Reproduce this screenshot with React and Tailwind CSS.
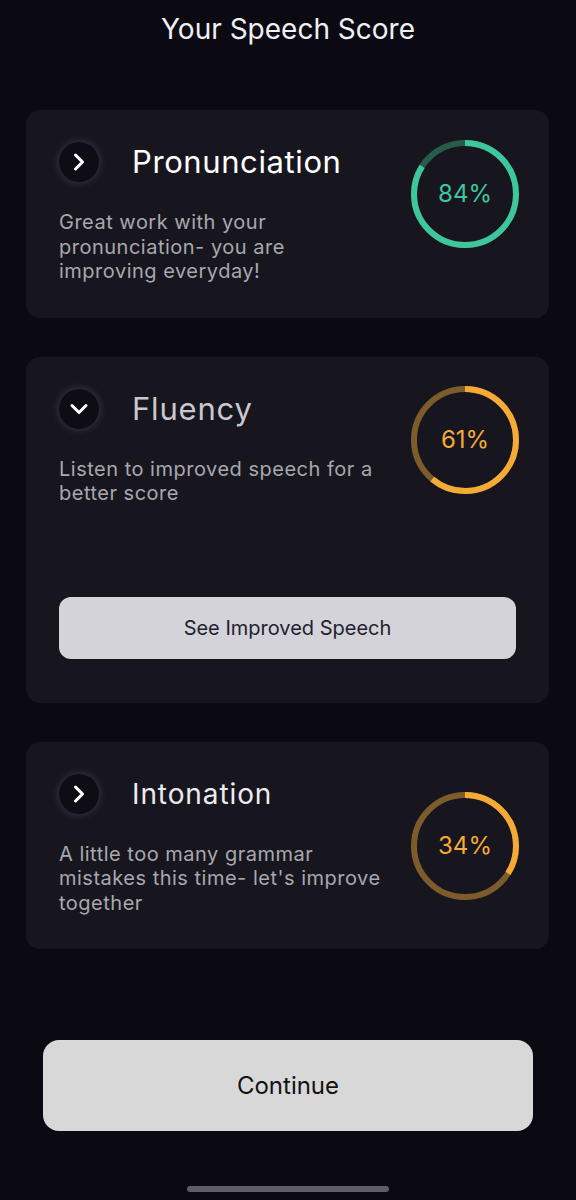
import { ChevronRight, ChevronDown } from "lucide-react";

const scores = [
  {
    title: "Pronunciation",
    titleClass: "text-[31px] tracking-[0.6px] text-white",
    text: ["Great work with your", "pronunciation- you are", "improving everyday!"],
    value: 84,
    color: "#3ec79d",
    track: "#285c4a",
    open: false,
    ringClass: "mt-[-2px]",
  },
  {
    title: "Fluency",
    titleClass: "text-[31px] tracking-[0.8px] text-[#c9c8ce]",
    text: ["Listen to improved speech for a", "better score"],
    value: 61,
    color: "#f6aa36",
    track: "#7d5c2c",
    open: true,
    ringClass: "mt-[-3px]",
  },
  {
    title: "Intonation",
    titleClass: "text-[28px] tracking-[0.9px] text-[#ececef]",
    text: ["A little too many grammar", "mistakes this time- let's improve", "together"],
    value: 34,
    color: "#f6aa36",
    track: "#7d5c2c",
    open: false,
    ringClass: "self-center mt-[4px]",
  },
];

const Ring = ({ value, color, track }) => {
  const r = 51;
  const c = 2 * Math.PI * r;
  return (
    <div className="relative w-[108px] h-[108px] shrink-0">
      <svg width="108" height="108" viewBox="0 0 108 108" className="-rotate-90">
        <circle cx="54" cy="54" r={r} fill="none" stroke={track} strokeWidth="6" />
        <circle
          cx="54"
          cy="54"
          r={r}
          fill="none"
          stroke={color}
          strokeWidth="6"
          strokeDasharray={`${(c * value) / 100} ${c}`}
        />
      </svg>
      <div
        className="absolute inset-0 flex items-center justify-center text-[24px]"
        style={{ color }}
      >
        {value}%
      </div>
    </div>
  );
};

const ScoreCard = ({ item }) => {
  return (
    <div className="bg-[#17161f] rounded-[14px] pt-[32px] pl-[33px] pr-[30px]">
      <div className="flex items-start justify-between">
        <div className="flex flex-col">
          <div className="flex items-center h-[40px]">
            <div className="w-[40px] h-[40px] rounded-full bg-[#0e0d15] flex items-center justify-center shadow-[0_0_8px_rgba(255,255,255,0.18)]">
              {item.open ? (
                <ChevronDown size={28} strokeWidth={2.6} color="#fff" />
              ) : (
                <ChevronRight size={28} strokeWidth={2.6} color="#fff" />
              )}
            </div>
            <span className={`ml-[33px] leading-[40px] ${item.titleClass}`}>{item.title}</span>
          </div>
          <p className="mt-[28px] text-[20px] tracking-[0.5px] leading-[24.5px] text-[#a9a8ae]">
            {item.text.map((line, i) => (
              <span key={i} className="block whitespace-nowrap">
                {line}
              </span>
            ))}
          </p>
        </div>
        <div className={item.ringClass}>
          <Ring value={item.value} color={item.color} track={item.track} />
        </div>
      </div>
      {item.open ? (
        <div className="pt-[91px] pb-[44px] pr-[3px]">
          <button className="w-full h-[62px] rounded-[12px] bg-[#d4d3d9] text-[#22212f] text-[20px]">
            See Improved Speech
          </button>
        </div>
      ) : (
        <div className="h-[34px]" />
      )}
    </div>
  );
};

export default function App() {
  return (
    <div
      className="w-[576px] h-[1200px] bg-[#0b0a13] flex flex-col"
      style={{ fontFamily: "Inter, 'Noto Sans', sans-serif" }}
    >
      <h1 className="text-center text-[28px] leading-[36px] text-[#f1f1f3] pt-[11px]">
        Your Speech Score
      </h1>
      <div className="mt-[63px] px-[26px] pr-[27px] flex flex-col gap-[39px]">
        {scores.map((item) => (
          <ScoreCard key={item.title} item={item} />
        ))}
      </div>
      <div className="mt-[91px] px-[43px]">
        <button className="w-full h-[91px] rounded-[16px] bg-[#d8d8d8] text-[#111] text-[24px]">
          Continue
        </button>
      </div>
      <div className="mt-auto mb-[8px] mx-auto w-[202px] h-[6px] rounded-full bg-[#5f5e66]" />
    </div>
  );
}
